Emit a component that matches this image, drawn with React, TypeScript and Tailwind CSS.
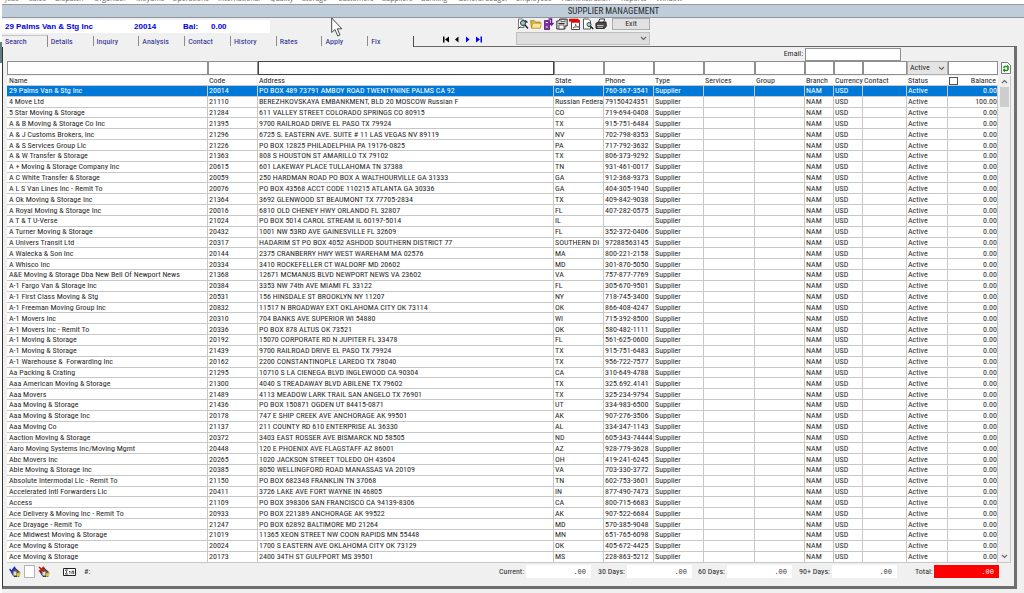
import type { ReactNode } from "react";

const MENU: [string, string][] = [
    ["Jobs", "w-[24px]"],
    ["Sales", "w-[26px]"],
    ["Dispatch", "w-[39px]"],
    ["Organizer", "w-[42px]"],
    ["Moyums", "w-[36px]"],
    ["Operations", "w-[46px]"],
    ["International", "w-[52px]"],
    ["Quality", "w-[32px]"],
    ["Storage", "w-[36px]"],
    ["Customers", "w-[44px]"],
    ["Suppliers", "w-[39px]"],
    ["Banking", "w-[37px]"],
    ["General Ledger", "w-[58px]"],
    ["Employees", "w-[46px]"],
    ["Administration", "w-[59px]"],
    ["Reports", "w-[35px]"],
    ["Window", "w-[40px]"],
];

const TABS = ["Search", "Details", "Inquiry", "Analysis", "Contact", "History", "Rates", "Apply", "Fix"];

// name | code | address | state | phone | balance
const DATA = `29 Palms Van & Stg Inc|20014|PO BOX 489 73791 AMBOY ROAD TWENTYNINE PALMS CA 92|CA|760-367-3541
4 Move Ltd|21110|BEREZHKOVSKAYA EMBANKMENT, BLD 20 MOSCOW Russian F|Russian Federat|79150424351|100.00
5 Star Moving & Storage|21284|611 VALLEY STREET COLORADO SPRINGS CO 80915|CO|719-694-0408
A & B Moving & Storage Co Inc|21395|9700 RAILROAD DRIVE EL PASO TX 79924|TX|915-751-6484
A & J Customs Brokers, Inc|21296|6725 S. EASTERN AVE. SUITE # 11 LAS VEGAS NV 89119|NV|702-798-8353
A & S Services Group Llc|21226|PO BOX 12825 PHILADELPHIA PA 19176-0825|PA|717-792-3632
A & W Transfer & Storage|21363|808 S HOUSTON ST AMARILLO TX 79102|TX|806-373-9292
A + Moving & Storage Company Inc|20615|601 LAKEWAY PLACE TULLAHOMA TN 37388|TN|931-461-0017
A C White Transfer & Storage|20059|250 HARDMAN ROAD PO BOX A WALTHOURVILLE GA 31333|GA|912-368-9373
A L S Van Lines Inc - Remit To|20076|PO BOX 43568 ACCT CODE 110215 ATLANTA GA 30336|GA|404-305-1940
A Ok Moving & Storage Inc|21364|3692 GLENWOOD ST BEAUMONT TX 77705-2834|TX|409-842-9038
A Royal Moving & Storage Inc|20016|6810 OLD CHENEY HWY ORLANDO FL 32807|FL|407-282-0575
A T & T U-Verse|21024|PO BOX 5014 CAROL STREAM IL 60197-5014|IL|
A Turner Moving & Storage|20432|1001 NW 53RD AVE GAINESVILLE FL 32609|FL|352-372-0406
A Univers Transit Ltd|20317|HADARIM ST PO BOX 4052 ASHDOD SOUTHERN DISTRICT 77|SOUTHERN DI|97288563145
A Walecka & Son Inc|20144|2375 CRANBERRY HWY WEST WAREHAM MA 02576|MA|800-221-2158
A Whisco Inc|20334|3410 ROCKEFELLER CT WALDORF MD 20602|MD|301-870-5050
A&E Moving & Storage Dba New Bell Of Newport News|21368|12671 MCMANUS BLVD NEWPORT NEWS VA 23602|VA|757-877-7769
A-1 Fargo Van & Storage Inc|20384|3353 NW 74th AVE MIAMI FL 33122|FL|305-670-9501
A-1 First Class Moving & Stg|20531|156 HINSDALE ST BROOKLYN NY 11207|NY|718-745-3400
A-1 Freeman Moving Group Inc|20832|11517 N BROADWAY EXT OKLAHOMA CITY OK 73114|OK|866-408-4247
A-1 Movers Inc|20310|704 BANKS AVE SUPERIOR WI 54880|WI|715-392-8500
A-1 Movers Inc - Remit To|20336|PO BOX 878 ALTUS OK 73521|OK|580-482-1111
A-1 Moving & Storage|20192|15070 CORPORATE RD N JUPITER FL 33478|FL|561-625-0600
A-1 Moving & Storage|21439|9700 RAILROAD DRIVE EL PASO TX 79924|TX|915-751-6483
A-1 Warehouse &  Forwarding Inc|20162|2200 CONSTANTINOPLE LAREDO TX 78040|TX|956-722-7577
Aa Packing & Crating|21295|10710 S LA CIENEGA BLVD INGLEWOOD CA 90304|CA|310-649-4788
Aaa American Moving & Storage|21300|4040 S TREADAWAY BLVD ABILENE TX 79602|TX|325.692.4141
Aaa Movers|21489|4113 MEADOW LARK TRAIL SAN ANGELO TX 76901|TX|325-234-9794
Aaa Moving & Storage|21436|PO BOX 150871 OGDEN UT 84415-0871|UT|334-983-6500
Aaa Moving & Storage Inc|20178|747 E SHIP CREEK AVE ANCHORAGE AK 99501|AK|907-276-3506
Aaa Moving Co|21137|211 COUNTY RD 610 ENTERPRISE AL 36330|AL|334-347-1143
Aaction Moving & Storage|20372|3403 EAST ROSSER AVE BISMARCK ND 58505|ND|605-343-74444
Aaro Moving Systems Inc/Moving Mgmt|20448|120 E PHOENIX AVE FLAGSTAFF AZ 86001|AZ|928-779-3628
Abc Movers Inc|20265|1020 JACKSON STREET TOLEDO OH 43604|OH|419-241-6245
Able Moving & Storage Inc|20385|8050 WELLINGFORD ROAD MANASSAS VA 20109|VA|703-330-3772
Absolute Intermodal Llc - Remit To|21150|PO BOX 682348 FRANKLIN TN 37068|TN|602-753-3601
Accelerated Intl Forwarders Llc|20411|3726 LAKE AVE FORT WAYNE IN 46805|IN|877-490-7473
Access|21109|PO BOX 398306 SAN FRANCISCO CA 94139-8306|CA|800-715-6683
Ace Delivery & Moving Inc - Remit To|20933|PO BOX 221389 ANCHORAGE AK 99522|AK|907-522-6684
Ace Drayage - Remit To|21247|PO BOX 62892 BALTIMORE MD 21264|MD|570-385-9048
Ace Midwest Moving & Storage|21019|11365 XEON STREET NW COON RAPIDS MN 55448|MN|651-765-6098
Ace Moving & Storage|20024|1700 S EASTERN AVE OKLAHOMA CITY OK 73129|OK|405-672-4425
Ace Moving & Storage|20173|2400 34TH ST GULFPORT MS 39501|MS|228-863-5212`;

const ROWS = DATA.split("\n").map((line) => {
    const [name, code, address, state, phone, balance = "0.00"] = line.split("|");
    return { name, code, address, state, phone, balance };
});

const COLUMNS: [string, string][] = [
    ["Name", "w-[201px]"],
    ["Code", "w-[50px]"],
    ["Address", ""],
    ["State", "w-[50px]"],
    ["Phone", "w-[50px]"],
    ["Type", "w-[50px]"],
    ["Services", "w-[51px]"],
    ["Group", "w-[50px]"],
    ["Branch", "w-[29px]"],
    ["Currency", "w-[29px]"],
    ["Contact", "w-[44px]"],
    ["Status", "w-[41px]"],
    ["Balance", "w-[50px]"],
];

function IconButton({ label, children }: { label: string; children: ReactNode }) {
    return (
        <button type="button" aria-label={label} className="h-[12px] w-[12px] shrink-0">
            <svg viewBox="0 0 12 12" className="block h-full w-full">{children}</svg>
        </button>
    );
}

function Toolbar() {
    return (
        <div className="flex w-[134px] items-center gap-px pl-px">
            <IconButton label="Find">
                <path d="M1.500 1h4l1.500 1.500v7H1.500z" fill="#fff" stroke="#555" strokeWidth=".8" />
                <path d="M.8 11 3.500 8.500" stroke="#333" />
                <circle cx="6" cy="5" r="2.500" fill="#8ccfd0" stroke="#222" strokeWidth=".9" />
                <path d="m8 7 3 3.500M8 2.500l2.500 2" stroke="#222" strokeWidth="1.400" />
            </IconButton>
            <IconButton label="Open">
                <path d="M.7 2.700h3.600l1.200 1.400h4.800v5.800H1.400z" fill="#e6bf42" stroke="#9a7414" strokeWidth=".8" />
                <path d="M2.600 5.300h8.700l-1 4.800H1.800z" fill="#ffe793" stroke="#b08a20" strokeWidth=".6" />
            </IconButton>
            <IconButton label="Export">
                <path d="M1.500 2.500h5v9h-5z" fill="#8132a8" stroke="#531479" strokeWidth=".8" />
                <path d="M2.800 4.500h2M2.800 9h2" stroke="#fff" />
                <path d="M5.500 1h3v5.500M6.500 5l2 2 2-2" fill="none" stroke="#6d1a94" strokeWidth="1.500" />
            </IconButton>
            <IconButton label="Save all">
                <path d="M.8 11V3h2l1-2h7.400v7H9v3z" fill="#d6d6d6" stroke="#222" strokeWidth=".9" />
                <path d="M5 1.500h4v2H5zM3 7h5v4H3z" fill="#fff" stroke="#333" strokeWidth=".7" />
                <path d="M2.500 5.500h6" stroke="#333" />
            </IconButton>
            <IconButton label="PDF">
                <path d="M2.500 3.500v8h8v-7" fill="#fff" stroke="#333" strokeWidth=".9" />
                <path d="M0 .8h9l2 2v2H2V3.500H0z" fill="#e40707" />
                <path d="M4 10c2-1 3-2.500 2.500-4C7 8 8 9 10 9 8 8.500 6 9 4 10z" fill="none" stroke="#555" strokeWidth=".8" />
            </IconButton>
            <IconButton label="Preview">
                <path d="M1.500 1h5l2 2v8h-7z" fill="#fff" stroke="#444" strokeWidth=".9" />
                <circle cx="7" cy="6.500" r="2" fill="#9fdddd" stroke="#333" strokeWidth=".9" />
                <path d="m8.500 8.200 2.700 2.800" stroke="#222" strokeWidth="1.500" />
            </IconButton>
            <IconButton label="Print">
                <path d="m3.500 4.500 1.200-3.500h5L8.500 5z" fill="#fff" stroke="#222" strokeWidth=".9" />
                <path d="M.8 5.500 3 4h8l.4 4-2 2.500H1z" fill="#4a4a4a" stroke="#111" strokeWidth=".8" />
                <path d="M2 7.500h6.500M2.500 9.300h5.500" stroke="#ddd" strokeWidth=".8" />
            </IconButton>
            <button type="button" className="ml-auto h-[12px] w-[38px] border border-[#adadad] bg-[#e1e1e1] leading-[10px]">
                Exit
            </button>
        </div>
    );
}

function RecordNav() {
    return (
        <div className="flex gap-[3px]">
            <button type="button" aria-label="First record">
                <svg viewBox="0 0 8 7" className="block h-[7px] w-[8px]"><path d="M1 .5h1.500v6H1zM7 .5v6L3 3.500z" fill="#000" /></svg>
            </button>
            <button type="button" aria-label="Previous record">
                <svg viewBox="0 0 8 7" className="block h-[7px] w-[8px]"><path d="M5.500.5v6L2 3.500z" fill="#000" /></svg>
            </button>
            <button type="button" aria-label="Next record">
                <svg viewBox="0 0 8 7" className="block h-[7px] w-[8px]"><path d="M2 .5v6l3.500-3z" fill="#00f" /></svg>
            </button>
            <button type="button" aria-label="Last record">
                <svg viewBox="0 0 8 7" className="block h-[7px] w-[8px]"><path d="M1 .5v6l4-3zM5.500.5H7v6H5.500z" fill="#00f" /></svg>
            </button>
        </div>
    );
}

function Chevron({ up = false }: { up?: boolean }) {
    return (
        <svg viewBox="0 0 7 5" className="block h-[5px] w-[7px]">
            <path d={up ? "M1 4 3.500 1.500 6 4" : "M1 1l2.500 2.500L6 1"} fill="none" stroke="#666" strokeWidth="1.100" />
        </svg>
    );
}

function Header() {
    return (
        <header className="flex h-[29px] shrink-0">
            <div className="w-[412px] shrink-0">
                <div className="mt-[2px] flex h-[13px] w-[268px] items-center bg-white pl-[3px] font-['Liberation_Sans'] text-[8px] font-bold text-[#0000e6]">
                    <span className="w-[129px]">29 Palms Van &amp; Stg Inc</span>
                    <span className="w-[49px]">20014</span>
                    <span className="w-[28px]">Bal:</span>
                    <span>0.00</span>
                </div>
                <nav className="mt-[2px] flex h-[12px]">
                    {TABS.map((tab, i) => (
                        <a
                            key={tab}
                            href={`#${tab.toLowerCase()}`}
                            className={`w-[46px] border-r pl-[3px] pt-px leading-[10px] text-[#1c1c8c] ${
                                i === 0 ? "border-t border-r-[#8c8c8c] border-t-[#c4c4c4]" : "mt-[1px] h-[10px] border-r-[#8c8c8c] last:h-auto last:border-r-[#4a4a4a]"
                            }`}
                        >
                            {tab}
                        </a>
                    ))}
                </nav>
            </div>
            <div className="mr-[7px] flex flex-1 items-start border-b border-[#696969]">
                <div className="w-[102px] pl-[28px] pt-[18px]">
                    <RecordNav />
                </div>
                <div>
                    <Toolbar />
                    <div className="relative mt-[2px] h-[13px] w-[134px]">
                        <select aria-label="Saved view" className="block h-full w-full appearance-none border border-[#bfbfbf] bg-[#dedede]">
                            <option></option>
                        </select>
                        <span className="pointer-events-none absolute right-[3px] top-[4px]"><Chevron /></span>
                    </div>
                </div>
            </div>
        </header>
    );
}

function Filters() {
    const field = "h-full min-w-0 w-full border bg-white px-[2px] outline-none";
    return (
        <div className="flex h-[14px] gap-[3px]">
            <div className="grid flex-1 grid-cols-[201px_50px_1fr_50px_50px_50px_51px_50px_29px_29px_44px_41px_50px]">
                {COLUMNS.map(([label]) =>
                    label === "Status" ? (
                        <div key={label} className="relative">
                            <select aria-label="Filter Status" className="block h-full w-full appearance-none border border-[#adadad] bg-[#e4e4e4] pl-[2px]">
                                <option>Active</option>
                            </select>
                            <span className="pointer-events-none absolute right-[3px] top-[5px]"><Chevron /></span>
                        </div>
                    ) : (
                        <input key={label} aria-label={`Filter ${label}`} className={`${field} ${label === "Address" ? "border-[#444]" : "border-[#8f8f8f]"}`} />
                    ),
                )}
            </div>
            <button type="button" aria-label="Refresh" className="w-[10px]">
                <svg viewBox="0 0 10 12" className="block h-[12px] w-[10px]">
                    <path d="M.5.5h6l3 3v8h-9z" fill="#fff" stroke="#555" strokeWidth=".8" />
                    <path d="M2 6c0-2 2-3 4-2V2.500l2.500 2.500L6 7V5.500c-1.500-.5-2.500 0-2.500 1z" fill="#2ba12b" />
                    <path d="M8 6c0 3-2 3.500-4 3v1.500L1.500 8 4 6.500v1.300c1.500.3 2.500 0 2.500-1.300z" fill="#188018" />
                </svg>
            </button>
        </div>
    );
}

function SupplierTable() {
    return (
        <table className="w-full min-w-0 flex-1 table-fixed border-separate border-spacing-0 bg-white">
            <thead>
                <tr>
                    {COLUMNS.map(([label, width]) => (
                        <th
                            key={label}
                            className={`${width} overflow-hidden whitespace-nowrap border-b border-[#c8c8c8] p-0 pl-px pt-px text-left align-middle font-normal leading-[8px] first:pl-[2px] last:text-right`}
                        >
                            {label === "Balance" ? (
                                <span className="flex items-start justify-between pr-[2px]">
                                    <input type="checkbox" aria-label="Non-zero balance only" className="h-[8px] w-[9px] appearance-none border border-[#555] bg-white" />
                                    {label}
                                </span>
                            ) : (
                                label
                            )}
                        </th>
                    ))}
                </tr>
            </thead>
            <tbody>
                {ROWS.map((row, i) => (
                    <tr key={row.code} className={i === 0 ? "bg-[#0078d7] text-white" : ""}>
                        {[row.name, row.code, row.address, row.state, row.phone, "Supplier", "", "", "NAM", "USD", "", "Active", row.balance].map((value, c) => (
                            <td
                                key={c}
                                className="overflow-hidden whitespace-pre border-b border-r border-[#c8c8c8] p-0 pl-px pt-px align-middle leading-[8px] first:pl-[2px] last:text-right"
                            >
                                {value}
                            </td>
                        ))}
                    </tr>
                ))}
            </tbody>
        </table>
    );
}

function ScrollBar() {
    return (
        <div className="flex w-[13px] shrink-0 flex-col items-center border-b border-r border-[#c8c8c8] bg-[#f0f0f0] py-[3px]">
            <Chevron up />
            <div className="mt-[3px] h-[20px] w-[9px] bg-[#cdcdcd]" />
            <span className="mt-auto"><Chevron /></span>
        </div>
    );
}

function Total({ label, width, red = false }: { label: string; width: string; red?: boolean }) {
    return (
        <label className={`flex items-center ${width}`}>
            <span className="flex-1 whitespace-nowrap">{label}</span>
            <input
                readOnly
                defaultValue=".00"
                className={`h-[13px] w-[65px] pr-[5px] text-right font-['Liberation_Mono'] text-[7px] ${red ? "bg-[#ff0000] text-white" : "bg-white text-[#333]"}`}
            />
        </label>
    );
}

function Footer() {
    return (
        <footer className="flex h-[23px] items-start pt-[2px]">
            <div className="flex items-center gap-[3px] pl-[2px]">
                <IconButton label="Apply filter">
                    <path d="M2 6 6 2l5 4.500-1 4H5z" fill="#555" stroke="#222" strokeWidth=".8" />
                    <path d="M8 7.500 11 6v4l-3 1z" fill="#e0c22e" />
                    <path d="M4.500 5.500h3v4h-3z" fill="#ddd" />
                    <path d="m.5 3 2 2.500L6 .8" fill="none" stroke="#1a2ae0" strokeWidth="1.500" />
                </IconButton>
                <input aria-label="Filter number" className="h-[13px] w-[11px] border border-[#b4b4b4] bg-white" />
                <IconButton label="Clear filter">
                    <path d="M2 6 6 2l5 4.500-1 4H5z" fill="#555" stroke="#222" strokeWidth=".8" />
                    <path d="M8 7.500 11 6v4l-3 1z" fill="#e0c22e" />
                    <path d="M4.500 5.500h3v4h-3z" fill="#ddd" />
                    <path d="m1 1 5 4.500M6 .8 1 5.500" stroke="#e01212" strokeWidth="1.600" />
                </IconButton>
                <button type="button" aria-label="Sum rows" className="ml-[10px]">
                    <svg viewBox="0 0 13 8" className="block h-[8px] w-[13px]">
                        <path d="M.5.5h12v7H.5z" fill="#fff" stroke="#222" />
                        <path d="M5 2H2.300L4 4 2.300 6H5M6 3.500h1.500M6 5h1.500M9 6V3.200h1.700V6" fill="none" stroke="#222" strokeWidth=".8" />
                    </svg>
                </button>
                <span className="pl-[5px]">#:</span>
            </div>
            <div className="ml-auto mr-[12px] flex">
                <Total label="Current:" width="mr-[7px] w-[92px]" />
                <Total label="30 Days:" width="mr-[6px] w-[94px]" />
                <Total label="60 Days:" width="mr-[7px] w-[94px]" />
                <Total label="90+ Days:" width="mr-[18px] w-[98px]" />
                <Total label="Total:" width="w-[84px]" red />
            </div>
        </footer>
    );
}

export default function App() {
    return (
        <div className="relative flex min-h-screen flex-col overflow-hidden bg-[#f0f0f0] font-['Roboto_Condensed','Roboto',sans-serif] text-[8px] leading-[10px] text-[#2a2a2a]">
            {/* Main menu, scrolled almost out of view */}
            <div className="flex h-[4px] shrink-0 items-end overflow-hidden bg-white pl-[5px] text-[#666]">
                {MENU.map(([label, width]) => (
                    <span key={label} className={`shrink-0 font-['Open_Sans'] text-[7px] ${width}`}>{label}</span>
                ))}
            </div>

            <div className="flex flex-1">
                <div className="w-[2px] shrink-0 bg-white pt-[38px]">
                    <div className="h-[21px] bg-[#5f7f84]" />
                </div>
                <div className="flex flex-1 flex-col">
                    <h1 className="h-[14px] shrink-0 border-b border-t border-b-[#8e969c] border-t-[#999] bg-[#bfcddb] pl-[201px] text-center text-[9px] leading-[13px]">
                        SUPPLIER MANAGEMENT
                    </h1>
                    <Header />
                    <main className="mb-[4px] mr-[7px] flex flex-1 flex-col border-b-[3px] border-l border-r-[3px] border-b-[#6e6e6e] border-l-[#333] border-r-[#6e6e6e] pl-[4px] pr-[3px]">
                        <label className="mr-[110px] flex h-[14px] items-center justify-end gap-[2px]">
                            Email:
                            <input className="h-[13px] w-[96px] border border-[#8f8f8f] bg-white" />
                        </label>
                        <Filters />
                        <div className="mt-px flex flex-1">
                            <SupplierTable />
                            <ScrollBar />
                        </div>
                        <Footer />
                    </main>
                </div>
            </div>

            {/* Mouse pointer */}
            <svg viewBox="0 0 12 20" className="pointer-events-none absolute left-[331px] top-[17px] h-[20px] w-[12px]">
                <path d="M.7 1v14.500l3.300-3 2.700 6.500 2.300-1-2.700-6.200h4.500z" fill="#fff" stroke="#333" strokeWidth=".9" />
            </svg>
        </div>
    );
}
